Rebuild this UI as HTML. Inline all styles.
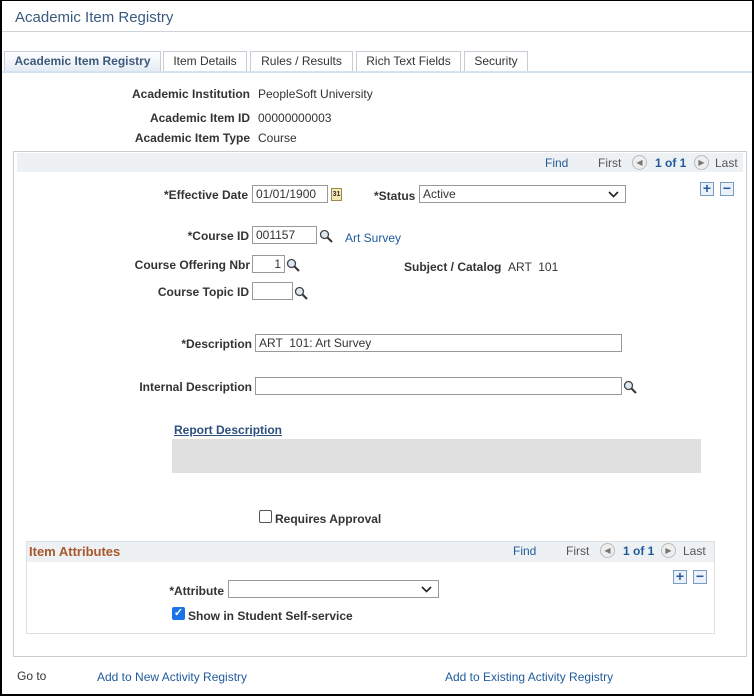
<!DOCTYPE html>
<html><head><style>
*{box-sizing:border-box}
body{margin:0;width:754px;height:696px;position:relative;font-family:"Liberation Sans",Arial,sans-serif;font-size:12px;color:#333;background:#fff;overflow:hidden}
.a{position:absolute;white-space:nowrap}
.b{font-weight:bold;color:#333}
.lnk{color:#1f5b9c}
.inp{position:absolute;border:1px solid #999;background:#fff;height:18px;font-size:12px;padding:1px 3px;line-height:14px}
.tab{position:absolute;top:51px;height:21px;border:1px solid #c6cdd4;border-bottom:none;background:#fff;font-size:12px;color:#333;text-align:center;line-height:19px}
.pm{position:absolute;width:14px;height:14px;border:1px solid #7a9cc4;background:#eaf1f9;color:#2a5a9a;font-weight:bold;font-size:14px;line-height:11px;text-align:center}
.mag{position:absolute;width:14px;height:14px}
.nav{position:absolute;width:15px;height:15px;border-radius:50%;border:1px solid #bbb;background:#eee;font-size:8px;color:#777;text-align:center;line-height:13px}
.chev{position:absolute;right:6px;top:5px;width:11px;height:7px}
</style></head><body>
<div style="position:absolute;inset:0;border:2px solid #000;border-top:1px solid #000"></div>
<div class="a" style="left:15px;top:9px;font-size:15px;color:#3a5a80">Academic Item Registry</div>
<div class="a" style="left:2px;top:31px;width:750px;height:1px;background:#cfd4d9"></div>
<div class="tab" style="left:4px;width:157px;background:linear-gradient(#fff,#e2ebf5);font-weight:bold;color:#3e5a7a">Academic Item Registry</div>
<div class="tab" style="left:163px;width:84px">Item Details</div>
<div class="tab" style="left:250px;width:103px">Rules / Results</div>
<div class="tab" style="left:356px;width:105px">Rich Text Fields</div>
<div class="tab" style="left:464px;width:64px">Security</div>
<div class="a" style="left:2px;top:71px;width:750px;height:2px;background:#d5e2f0"></div>

<div class="a b" style="right:504px;top:87px">Academic Institution</div>
<div class="a" style="left:258px;top:87px">PeopleSoft University</div>
<div class="a b" style="right:504px;top:111px">Academic Item ID</div>
<div class="a" style="left:258px;top:111px">00000000003</div>
<div class="a b" style="right:504px;top:131px">Academic Item Type</div>
<div class="a" style="left:258px;top:131px">Course</div>

<div class="a" style="left:13px;top:151px;width:734px;height:506px;border:1px solid #c8cdd2"></div>
<div class="a" style="left:17px;top:153px;width:726px;height:19px;background:#eef1f3"></div>
<div class="a lnk" style="left:545px;top:156px">Find</div>
<div class="a" style="left:598px;top:156px;color:#555">First</div>
<div class="nav" style="left:632px;top:155px">◀</div>
<div class="a lnk b" style="left:655px;top:156px;color:#1f5b9c">1 of 1</div>
<div class="nav" style="left:694px;top:155px">▶</div>
<div class="a" style="left:715px;top:156px;color:#555">Last</div>
<div class="pm" style="left:700px;top:182px">+</div>
<div class="pm" style="left:720px;top:182px">−</div>

<div class="a b" style="right:506px;top:188px">*Effective Date</div>
<div class="inp" style="left:252px;top:185px;width:76px">01/01/1900</div>
<div class="a" style="left:331px;top:188px;width:11px;height:13px;background:#f3e7b8;border:1px solid #a08a4a;font-size:7px;line-height:11px;text-align:center;font-weight:bold">31</div>
<div class="a b" style="left:374px;top:189px">*Status</div>
<div class="inp" style="left:419px;top:185px;width:207px">Active<svg class="chev" viewBox="0 0 11 7"><path d="M1 1l4.5 4.5L10 1" fill="none" stroke="#222" stroke-width="1.6"/></svg></div>

<div class="a b" style="right:505px;top:229px">*Course ID</div>
<div class="inp" style="left:252px;top:226px;width:65px">001157</div>
<svg class="mag" style="left:319px;top:229px" viewBox="0 0 14 14"><circle cx="5.5" cy="5.5" r="4" fill="#dde8f2" stroke="#444" stroke-width="1.3"/><path d="M8.5 8.5L13 13" stroke="#333" stroke-width="2"/></svg>
<div class="a lnk" style="left:345px;top:231px">Art Survey</div>

<div class="a b" style="right:504px;top:258px">Course Offering Nbr</div>
<div class="inp" style="left:252px;top:255px;width:33px;text-align:right">1</div>
<svg class="mag" style="left:286px;top:258px" viewBox="0 0 14 14"><circle cx="5.5" cy="5.5" r="4" fill="#dde8f2" stroke="#444" stroke-width="1.3"/><path d="M8.5 8.5L13 13" stroke="#333" stroke-width="2"/></svg>
<div class="a b" style="left:404px;top:260px">Subject / Catalog</div>
<div class="a" style="left:508px;top:260px">ART &nbsp;101</div>

<div class="a b" style="right:505px;top:285px">Course Topic ID</div>
<div class="inp" style="left:252px;top:282px;width:41px"></div>
<svg class="mag" style="left:294px;top:286px" viewBox="0 0 14 14"><circle cx="5.5" cy="5.5" r="4" fill="#dde8f2" stroke="#444" stroke-width="1.3"/><path d="M8.5 8.5L13 13" stroke="#333" stroke-width="2"/></svg>

<div class="a b" style="right:502px;top:337px">*Description</div>
<div class="inp" style="left:255px;top:334px;width:367px">ART &nbsp;101: Art Survey</div>
<div class="a b" style="right:502px;top:380px">Internal Description</div>
<div class="inp" style="left:255px;top:377px;width:367px"></div>
<svg class="mag" style="left:623px;top:380px" viewBox="0 0 14 14"><circle cx="5.5" cy="5.5" r="4" fill="#dde8f2" stroke="#444" stroke-width="1.3"/><path d="M8.5 8.5L13 13" stroke="#333" stroke-width="2"/></svg>

<div class="a b" style="left:174px;top:423px;color:#2c4f7c;text-decoration:underline">Report Description</div>
<div class="a" style="left:172px;top:439px;width:529px;height:34px;background:#e0e0e0"></div>

<div class="a" style="left:259px;top:510px;width:13px;height:13px;border:1px solid #555;border-radius:2px;background:#fff"></div>
<div class="a b" style="left:275px;top:512px">Requires Approval</div>

<div class="a" style="left:26px;top:541px;width:689px;height:93px;border:1px solid #dde1e4"></div>
<div class="a" style="left:27px;top:542px;width:687px;height:20px;background:#eef1f3"></div>
<div class="a b" style="left:29px;top:544px;color:#a8582a;font-size:13px">Item Attributes</div>
<div class="a lnk" style="left:513px;top:544px">Find</div>
<div class="a" style="left:566px;top:544px;color:#555">First</div>
<div class="nav" style="left:600px;top:543px">◀</div>
<div class="a lnk b" style="left:623px;top:544px;color:#1f5b9c">1 of 1</div>
<div class="nav" style="left:661px;top:543px">▶</div>
<div class="a" style="left:683px;top:544px;color:#555">Last</div>
<div class="pm" style="left:673px;top:570px">+</div>
<div class="pm" style="left:693px;top:570px">−</div>

<div class="a b" style="right:530px;top:584px">*Attribute</div>
<div class="inp" style="left:228px;top:580px;width:211px"><svg class="chev" viewBox="0 0 11 7"><path d="M1 1l4.5 4.5L10 1" fill="none" stroke="#222" stroke-width="1.6"/></svg></div>
<div class="a" style="left:172px;top:607px;width:13px;height:13px;border-radius:2px;background:#1a73e8;color:#fff;font-size:11px;line-height:13px;text-align:center;font-weight:bold">✓</div>
<div class="a b" style="left:188px;top:609px">Show in Student Self-service</div>

<div class="a" style="left:17px;top:669px;color:#333">Go to</div>
<div class="a lnk" style="left:97px;top:670px">Add to New Activity Registry</div>
<div class="a lnk" style="left:445px;top:670px">Add to Existing Activity Registry</div>
</body></html>
